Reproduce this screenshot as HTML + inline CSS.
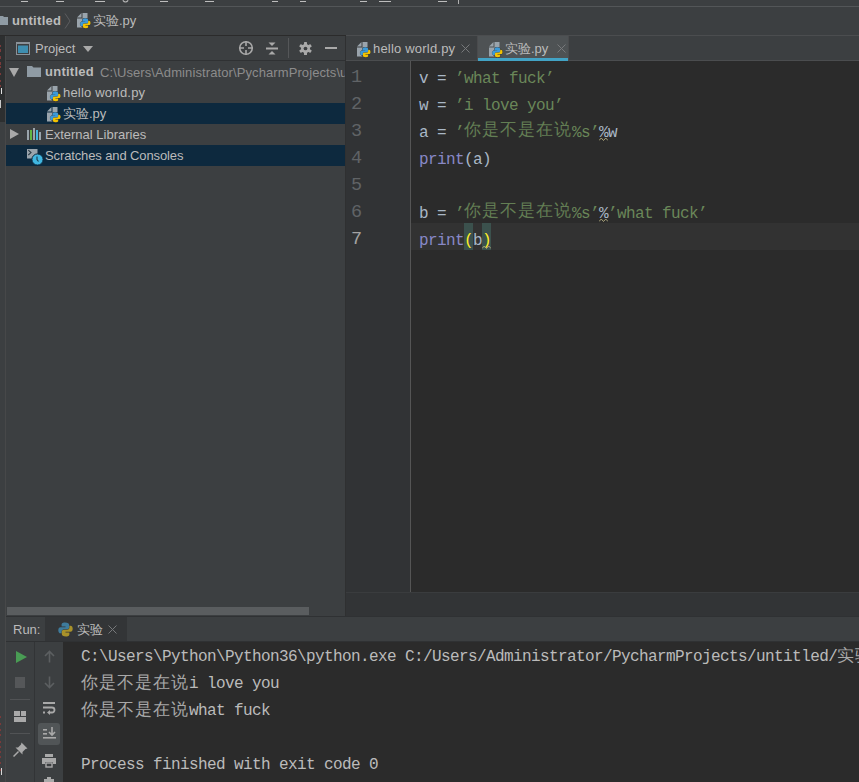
<!DOCTYPE html>
<html><head><meta charset="utf-8">
<style>
*{margin:0;padding:0;box-sizing:border-box}
html,body{width:859px;height:782px;overflow:hidden;background:#3c3f41;font-family:"Liberation Sans",sans-serif;font-size:13px;color:#bbbbbb}
.a{position:absolute}
.mono{font-family:"Liberation Mono",monospace;font-size:16px;letter-spacing:-0.6px;white-space:pre}
.cj{font-size:17px;letter-spacing:1px;position:relative;top:-2px;line-height:0}
svg{position:absolute;display:block}
.t{white-space:pre;color:#bbbbbb;line-height:15px}
.ul{top:1px;height:1px;background:#bdbdbd}
.s{color:#6a8759}.s .cj{color:#637e54}.k{color:#8888c6}.y{color:#ffef28}
</style></head><body>


<!-- menu bar remnants -->
<div class="a" style="left:0;top:0;width:859px;height:6px;background:#3c3f41"></div>
<div class="a" style="left:0;top:6px;width:859px;height:1px;background:#535658"></div>

<!-- nav bar -->
<div class="a" style="left:0;top:7px;width:859px;height:28px;background:#3c3f41"></div>
<div class="a" style="left:0;top:35px;width:346px;height:1px;background:#2b2b2b"></div>

<!-- left strip -->
<div class="a" style="left:0;top:36px;width:5px;height:746px;background:#3c3f41"></div>
<div class="a" style="left:0;top:36px;width:5px;height:86px;background:#2d2f30"></div>
<div class="a" style="left:5px;top:36px;width:1px;height:746px;background:#474849"></div>


<div class="a" style="left:0;top:45px;width:1px;height:2px;background:#7a3a3a"></div>
<div class="a" style="left:0;top:49px;width:1px;height:3px;background:#7a3a3a"></div>
<div class="a" style="left:0;top:56px;width:1px;height:3px;background:#7a3a3a"></div>
<div class="a" style="left:0;top:62px;width:1px;height:3px;background:#7a3a3a"></div>
<div class="a" style="left:0;top:66px;width:1px;height:2px;background:#7a3a3a"></div>
<div class="a" style="left:0;top:73px;width:1px;height:2px;background:#7a3a3a"></div>
<div class="a" style="left:0;top:80px;width:1px;height:2px;background:#7a3a3a"></div>
<div class="a" style="left:0;top:85px;width:1px;height:2px;background:#7a3a3a"></div>
<div class="a" style="left:1px;top:88px;width:1px;height:6px;background:#e0e0e0"></div>
<div class="a" style="left:0;top:100px;width:1px;height:8px;background:#c8c8c8"></div>
<div class="a" style="left:0;top:716px;width:1px;height:2px;background:#7a3a3a"></div>
<div class="a" style="left:0;top:723px;width:1px;height:2px;background:#7a3a3a"></div>
<div class="a" style="left:0;top:729px;width:1px;height:2px;background:#7a3a3a"></div>
<div class="a" style="left:0;top:734px;width:1px;height:2px;background:#7a3a3a"></div>
<div class="a" style="left:0;top:741px;width:1px;height:2px;background:#7a3a3a"></div>
<div class="a" style="left:0;top:746px;width:1px;height:2px;background:#7a3a3a"></div>
<div class="a" style="left:0;top:751px;width:1px;height:2px;background:#7a3a3a"></div>
<div class="a" style="left:0;top:756px;width:1px;height:2px;background:#7a3a3a"></div>
<div class="a" style="left:0;top:762px;width:1px;height:2px;background:#7a3a3a"></div>
<div class="a" style="left:0;top:769px;width:1px;height:2px;background:#7a3a3a"></div>
<div class="a" style="left:1px;top:768px;width:1px;height:7px;background:#d8d8d8"></div>
<!-- project panel -->
<div class="a" style="left:6px;top:36px;width:339px;height:24px;background:#3c3f41"></div>
<div class="a" style="left:6px;top:60px;width:339px;height:1px;background:#2f3133"></div>
<div class="a" style="left:6px;top:103px;width:339px;height:21px;background:#0d293e"></div>
<div class="a" style="left:6px;top:145px;width:339px;height:21px;background:#0d293e"></div>
<div class="a" style="left:7px;top:607px;width:302px;height:8px;background:#5a5d5f"></div>
<div class="a" style="left:345px;top:36px;width:1px;height:580px;background:#2f3031"></div>

<!-- editor -->
<div class="a" style="left:346px;top:35px;width:513px;height:1px;background:#4b4d4f"></div>
<div class="a" style="left:346px;top:36px;width:513px;height:24px;background:#3c3f41"></div>
<div class="a" style="left:478px;top:36px;width:90px;height:24px;background:#4e5254"></div>
<div class="a" style="left:346px;top:60px;width:513px;height:1px;background:#4b4d4f"></div>
<div class="a" style="left:477px;top:36px;width:1px;height:24px;background:#4a4b4d"></div>
<div class="a" style="left:568px;top:36px;width:1px;height:24px;background:#4a4b4d"></div>
<div class="a" style="left:478px;top:58px;width:90px;height:3px;background:#42a3c5"></div>
<div class="a" style="left:346px;top:61px;width:64px;height:531px;background:#313335"></div>
<div class="a" style="left:410px;top:61px;width:1px;height:531px;background:#555555"></div>
<div class="a" style="left:411px;top:61px;width:448px;height:531px;background:#2b2b2b"></div>
<div class="a" style="left:411px;top:223px;width:448px;height:27px;background:#323232"></div>
<div class="a" style="left:346px;top:592px;width:513px;height:1px;background:#3a3c3e"></div>
<div class="a" style="left:346px;top:593px;width:513px;height:23px;background:#323436"></div>

<div class="a" style="left:6px;top:616px;width:853px;height:1px;background:#2f3133"></div>

<!-- run header -->
<div class="a" style="left:6px;top:617px;width:853px;height:24px;background:#3c3f41"></div>
<div class="a" style="left:45px;top:617px;width:82px;height:24px;background:#333537"></div>
<div class="a" style="left:6px;top:641px;width:853px;height:1px;background:#2f3133"></div>

<!-- run toolbar + console -->
<div class="a" style="left:6px;top:642px;width:57px;height:140px;background:#3c3f41"></div>
<div class="a" style="left:34px;top:642px;width:1px;height:140px;background:#323436"></div>
<div class="a" style="left:63px;top:642px;width:796px;height:140px;background:#2b2b2b"></div>


<!-- menu underline remnants -->
<div class="a ul" style="left:21px;width:7px"></div>
<div class="a ul" style="left:56px;width:8px"></div>
<div class="a ul" style="left:95px;width:10px"></div>
<div class="a ul" style="left:160px;width:8px"></div>
<div class="a ul" style="left:205px;width:9px"></div>
<div class="a ul" style="left:272px;width:6px"></div>
<div class="a ul" style="left:300px;width:6px"></div>
<div class="a ul" style="left:360px;width:7px"></div>
<div class="a ul" style="left:379px;width:12px"></div>
<div class="a ul" style="left:438px;width:9px"></div>

<svg width="7" height="4" viewBox="0 0 7 4" style="left:122px;top:0"><path d="M0.8 0.3Q3.5 3.6 6.2 0.3" fill="none" stroke="#b8b8b8" stroke-width="1.1"/></svg>
<div class="a" style="left:458px;top:0;width:1px;height:4px;background:#b0b0b0"></div>
<!-- nav bar content -->
<svg width="8" height="10" viewBox="0 0 8 10" style="left:0;top:15px"><path d="M0 1H3L4 2H8V10H0Z" fill="#8f9ba4"/></svg>
<div class="a t" style="left:12px;top:13px;font-weight:bold;color:#bbbbbb;letter-spacing:0.3px">untitled</div>
<svg width="7" height="16" viewBox="0 0 7 16" style="left:64px;top:13px"><path d="M1 0.5L6 8L1 15.5" fill="none" stroke="#5c5e60" stroke-width="1"/></svg>
<svg class="pyi" width="14" height="16" viewBox="0 0 14 16" style="left:77px;top:13px"><path d="M0 4.5L4.5 0V4.5Z" fill="#9aa4ac"/><path d="M5.5 0H10.5V5.5H5.5Z" fill="#9aa4ac"/><path d="M0 5.5H5.5V14.5H0Z" fill="#9aa4ac"/>
<g transform="translate(3.2 5.2) scale(0.7)"><path d="M7 0.5C4 0.5 3.6 1.8 3.6 3V4.5H7.5V5.2H2.5C1.2 5.2 0.3 6.3 0.3 8.2S1.2 11.3 2.5 11.3H3.6V9.6C3.6 8.3 4.7 7.3 6 7.3H9.2C10.3 7.3 11.2 6.4 11.2 5.3V3C11.2 1.6 10 0.5 7 0.5Z" fill="#3c9ad8" stroke="#33373a" stroke-width="1.4" paint-order="stroke"/><path d="M8 14.5C11 14.5 11.4 13.2 11.4 12V10.5H7.5V9.8H12.5C13.8 9.8 14.7 8.7 14.7 6.8S13.8 3.7 12.5 3.7H11.4V5.4C11.4 6.7 10.3 7.7 9 7.7H5.8C4.7 7.7 3.8 8.6 3.8 9.7V12C3.8 13.4 5 14.5 8 14.5Z" fill="#f4c300" stroke="#33373a" stroke-width="1.4" paint-order="stroke"/><path d="M7 0.5C4 0.5 3.6 1.8 3.6 3V4.5H7.5V5.2H2.5C1.2 5.2 0.3 6.3 0.3 8.2S1.2 11.3 2.5 11.3H3.6V9.6C3.6 8.3 4.7 7.3 6 7.3H9.2C10.3 7.3 11.2 6.4 11.2 5.3V3C11.2 1.6 10 0.5 7 0.5Z" fill="#3c9ad8"/></g></svg>
<div class="a t" style="left:93px;top:13px">实验.py</div>

<!-- project header -->
<svg width="14" height="13" viewBox="0 0 14 13" style="left:16px;top:42px"><rect x="0.5" y="0.5" width="13" height="12" fill="none" stroke="#8a9299" stroke-width="1"/><rect x="0" y="0" width="14" height="2" fill="#8a9299"/><rect x="2" y="3.5" width="10" height="7.5" fill="#3e8eb0"/></svg>
<div class="a t" style="left:35px;top:41px">Project</div>
<svg width="10" height="6" viewBox="0 0 10 6" style="left:83px;top:46px"><path d="M0 0H10L5 6Z" fill="#a9a9a9"/></svg>

<svg width="16" height="16" viewBox="0 0 16 16" style="left:238px;top:40px"><circle cx="8" cy="8" r="6.3" fill="none" stroke="#a9a9a9" stroke-width="1.6"/><path d="M8 1V6M8 10V15M1 8H6M10 8H15" stroke="#a9a9a9" stroke-width="1.6"/></svg>
<svg width="12" height="13" viewBox="0 0 12 13" style="left:266px;top:42px"><path d="M2.5 0.5H9.5L6 4Z" fill="#a9a9a9"/><path d="M2.5 12.5H9.5L6 9Z" fill="#a9a9a9"/><rect x="0" y="5.5" width="12" height="2" fill="#a9a9a9"/></svg>
<div class="a" style="left:288px;top:38px;width:1px;height:20px;background:#555759"></div>
<svg width="13" height="13" viewBox="0 0 14 14" style="left:299px;top:42px"><g fill="#a9a9a9"><rect x="5.4" y="0" width="3.2" height="3.5" rx="0.6" transform="rotate(0 7 7)"/><rect x="5.4" y="0" width="3.2" height="3.5" rx="0.6" transform="rotate(60 7 7)"/><rect x="5.4" y="0" width="3.2" height="3.5" rx="0.6" transform="rotate(120 7 7)"/><rect x="5.4" y="0" width="3.2" height="3.5" rx="0.6" transform="rotate(180 7 7)"/><rect x="5.4" y="0" width="3.2" height="3.5" rx="0.6" transform="rotate(240 7 7)"/><rect x="5.4" y="0" width="3.2" height="3.5" rx="0.6" transform="rotate(300 7 7)"/><circle cx="7" cy="7" r="4.8"/></g><circle cx="7" cy="7" r="2" fill="#3c3f41"/></svg>
<div class="a" style="left:325px;top:47px;width:12px;height:2px;background:#a9a9a9"></div>

<!-- tree -->
<svg width="10" height="9" viewBox="0 0 10 9" style="left:9px;top:68px"><path d="M0 0H10L5 9Z" fill="#a9a9a9"/></svg>
<svg width="14" height="11" viewBox="0 0 14 11" style="left:27px;top:66px"><path d="M0 0H5L6.5 1.5H14V11H0Z" fill="#8f9ba4"/></svg>
<div class="a t" style="left:45px;top:64px;font-weight:bold;letter-spacing:0.25px">untitled</div>
<div class="a" style="left:100px;top:61px;width:245px;height:21px;overflow:hidden"><div class="a t" style="left:0;top:4px;color:#8c8c8c;letter-spacing:0.1px">C:\Users\Administrator\PycharmProjects\untitled</div></div>
<svg class="pyi" width="14" height="16" viewBox="0 0 14 16" style="left:47px;top:86px"><path d="M0 4.5L4.5 0V4.5Z" fill="#9aa4ac"/><path d="M5.5 0H10.5V5.5H5.5Z" fill="#9aa4ac"/><path d="M0 5.5H5.5V14.5H0Z" fill="#9aa4ac"/>
<g transform="translate(3.2 5.2) scale(0.7)"><path d="M7 0.5C4 0.5 3.6 1.8 3.6 3V4.5H7.5V5.2H2.5C1.2 5.2 0.3 6.3 0.3 8.2S1.2 11.3 2.5 11.3H3.6V9.6C3.6 8.3 4.7 7.3 6 7.3H9.2C10.3 7.3 11.2 6.4 11.2 5.3V3C11.2 1.6 10 0.5 7 0.5Z" fill="#3c9ad8" stroke="#33373a" stroke-width="1.4" paint-order="stroke"/><path d="M8 14.5C11 14.5 11.4 13.2 11.4 12V10.5H7.5V9.8H12.5C13.8 9.8 14.7 8.7 14.7 6.8S13.8 3.7 12.5 3.7H11.4V5.4C11.4 6.7 10.3 7.7 9 7.7H5.8C4.7 7.7 3.8 8.6 3.8 9.7V12C3.8 13.4 5 14.5 8 14.5Z" fill="#f4c300" stroke="#33373a" stroke-width="1.4" paint-order="stroke"/><path d="M7 0.5C4 0.5 3.6 1.8 3.6 3V4.5H7.5V5.2H2.5C1.2 5.2 0.3 6.3 0.3 8.2S1.2 11.3 2.5 11.3H3.6V9.6C3.6 8.3 4.7 7.3 6 7.3H9.2C10.3 7.3 11.2 6.4 11.2 5.3V3C11.2 1.6 10 0.5 7 0.5Z" fill="#3c9ad8"/></g></svg>
<div class="a t" style="left:63px;top:85px;letter-spacing:0.2px">hello world.py</div>
<svg class="pyi" width="14" height="16" viewBox="0 0 14 16" style="left:47px;top:107px"><path d="M0 4.5L4.5 0V4.5Z" fill="#9aa4ac"/><path d="M5.5 0H10.5V5.5H5.5Z" fill="#9aa4ac"/><path d="M0 5.5H5.5V14.5H0Z" fill="#9aa4ac"/>
<g transform="translate(3.2 5.2) scale(0.7)"><path d="M7 0.5C4 0.5 3.6 1.8 3.6 3V4.5H7.5V5.2H2.5C1.2 5.2 0.3 6.3 0.3 8.2S1.2 11.3 2.5 11.3H3.6V9.6C3.6 8.3 4.7 7.3 6 7.3H9.2C10.3 7.3 11.2 6.4 11.2 5.3V3C11.2 1.6 10 0.5 7 0.5Z" fill="#3c9ad8" stroke="#33373a" stroke-width="1.4" paint-order="stroke"/><path d="M8 14.5C11 14.5 11.4 13.2 11.4 12V10.5H7.5V9.8H12.5C13.8 9.8 14.7 8.7 14.7 6.8S13.8 3.7 12.5 3.7H11.4V5.4C11.4 6.7 10.3 7.7 9 7.7H5.8C4.7 7.7 3.8 8.6 3.8 9.7V12C3.8 13.4 5 14.5 8 14.5Z" fill="#f4c300" stroke="#33373a" stroke-width="1.4" paint-order="stroke"/><path d="M7 0.5C4 0.5 3.6 1.8 3.6 3V4.5H7.5V5.2H2.5C1.2 5.2 0.3 6.3 0.3 8.2S1.2 11.3 2.5 11.3H3.6V9.6C3.6 8.3 4.7 7.3 6 7.3H9.2C10.3 7.3 11.2 6.4 11.2 5.3V3C11.2 1.6 10 0.5 7 0.5Z" fill="#3c9ad8"/></g></svg>
<div class="a t" style="left:63px;top:106px">实验.py</div>
<svg width="9" height="10" viewBox="0 0 9 10" style="left:10px;top:129px"><path d="M0 0V10L9 5Z" fill="#a9a9a9"/></svg>
<svg width="15" height="13" viewBox="0 0 15 13" style="left:27px;top:128px"><rect x="0" y="2" width="2" height="10" fill="#9aa4ac"/><rect x="3" y="2" width="2" height="10" fill="#62b543"/><rect x="6" y="0" width="2" height="12" fill="#9aa4ac"/><rect x="9" y="2" width="2" height="10" fill="#40b6e0"/><rect x="12" y="4" width="2" height="8" fill="#9aa4ac"/></svg>
<div class="a t" style="left:45px;top:127px">External Libraries</div>
<svg width="17" height="17" viewBox="0 0 17 17" style="left:27px;top:149px"><path d="M0 0H10.5V9.5H0Z" fill="#9aa4ac"/><path d="M1.3 1.2L4 3.6 1.3 6" fill="none" stroke="#2b3a44" stroke-width="1.1"/><circle cx="10.5" cy="10.5" r="5.6" fill="#40b6e0" stroke="#0d293e" stroke-width="1"/><path d="M10 7.5V10.5L11.5 12.5" fill="none" stroke="#1d3b4c" stroke-width="1.1"/></svg>
<div class="a t" style="left:45px;top:148px;letter-spacing:-0.12px">Scratches and Consoles</div>

<!-- editor tabs -->
<svg class="pyi" width="14" height="16" viewBox="0 0 14 16" style="left:357px;top:42px"><path d="M0 4.5L4.5 0V4.5Z" fill="#9aa4ac"/><path d="M5.5 0H10.5V5.5H5.5Z" fill="#9aa4ac"/><path d="M0 5.5H5.5V14.5H0Z" fill="#9aa4ac"/>
<g transform="translate(3.2 5.2) scale(0.7)"><path d="M7 0.5C4 0.5 3.6 1.8 3.6 3V4.5H7.5V5.2H2.5C1.2 5.2 0.3 6.3 0.3 8.2S1.2 11.3 2.5 11.3H3.6V9.6C3.6 8.3 4.7 7.3 6 7.3H9.2C10.3 7.3 11.2 6.4 11.2 5.3V3C11.2 1.6 10 0.5 7 0.5Z" fill="#3c9ad8" stroke="#33373a" stroke-width="1.4" paint-order="stroke"/><path d="M8 14.5C11 14.5 11.4 13.2 11.4 12V10.5H7.5V9.8H12.5C13.8 9.8 14.7 8.7 14.7 6.8S13.8 3.7 12.5 3.7H11.4V5.4C11.4 6.7 10.3 7.7 9 7.7H5.8C4.7 7.7 3.8 8.6 3.8 9.7V12C3.8 13.4 5 14.5 8 14.5Z" fill="#f4c300" stroke="#33373a" stroke-width="1.4" paint-order="stroke"/><path d="M7 0.5C4 0.5 3.6 1.8 3.6 3V4.5H7.5V5.2H2.5C1.2 5.2 0.3 6.3 0.3 8.2S1.2 11.3 2.5 11.3H3.6V9.6C3.6 8.3 4.7 7.3 6 7.3H9.2C10.3 7.3 11.2 6.4 11.2 5.3V3C11.2 1.6 10 0.5 7 0.5Z" fill="#3c9ad8"/></g></svg>
<div class="a t" style="left:373px;top:41px;letter-spacing:0.2px">hello world.py</div>
<svg width="9" height="9" viewBox="0 0 9 9" style="left:461px;top:44px"><path d="M0.5 0.5L8.5 8.5M8.5 0.5L0.5 8.5" stroke="#77797b" stroke-width="1"/></svg>
<svg class="pyi" width="14" height="16" viewBox="0 0 14 16" style="left:489px;top:42px"><path d="M0 4.5L4.5 0V4.5Z" fill="#9aa4ac"/><path d="M5.5 0H10.5V5.5H5.5Z" fill="#9aa4ac"/><path d="M0 5.5H5.5V14.5H0Z" fill="#9aa4ac"/>
<g transform="translate(3.2 5.2) scale(0.7)"><path d="M7 0.5C4 0.5 3.6 1.8 3.6 3V4.5H7.5V5.2H2.5C1.2 5.2 0.3 6.3 0.3 8.2S1.2 11.3 2.5 11.3H3.6V9.6C3.6 8.3 4.7 7.3 6 7.3H9.2C10.3 7.3 11.2 6.4 11.2 5.3V3C11.2 1.6 10 0.5 7 0.5Z" fill="#3c9ad8" stroke="#33373a" stroke-width="1.4" paint-order="stroke"/><path d="M8 14.5C11 14.5 11.4 13.2 11.4 12V10.5H7.5V9.8H12.5C13.8 9.8 14.7 8.7 14.7 6.8S13.8 3.7 12.5 3.7H11.4V5.4C11.4 6.7 10.3 7.7 9 7.7H5.8C4.7 7.7 3.8 8.6 3.8 9.7V12C3.8 13.4 5 14.5 8 14.5Z" fill="#f4c300" stroke="#33373a" stroke-width="1.4" paint-order="stroke"/><path d="M7 0.5C4 0.5 3.6 1.8 3.6 3V4.5H7.5V5.2H2.5C1.2 5.2 0.3 6.3 0.3 8.2S1.2 11.3 2.5 11.3H3.6V9.6C3.6 8.3 4.7 7.3 6 7.3H9.2C10.3 7.3 11.2 6.4 11.2 5.3V3C11.2 1.6 10 0.5 7 0.5Z" fill="#3c9ad8"/></g></svg>
<div class="a t" style="left:505px;top:41px">实验.py</div>
<svg width="9" height="9" viewBox="0 0 9 9" style="left:557px;top:44px"><path d="M0.5 0.5L8.5 8.5M8.5 0.5L0.5 8.5" stroke="#77797b" stroke-width="1"/></svg>

<!-- gutter numbers -->
<div class="a mono ln" style="left:351px;top:64px;color:#606366;line-height:27px;font-size:18.5px;letter-spacing:0">1
2
3
4
5
6
<span style="color:#a4a3a3">7</span></div>

<!-- code -->
<div class="a" style="left:464px;top:223px;width:9px;height:27px;background:#3b514d"></div>
<div class="a" style="left:482px;top:223px;width:9px;height:27px;background:#3b514d"></div>
<div class="a mono code" style="left:419px;top:66px;line-height:27px;color:#a9b7c6">v = <span class="s">’what fuck’</span>
w = <span class="s">’i love you’</span>
a = <span class="s">’<span class="cj">你是不是在说</span>%s’</span>%w
<span class="k">print</span>(a)

b = <span class="s">’<span class="cj">你是不是在说</span>%s’</span>%<span class="s">’what fuck’</span>
<span class="k">print</span><span class="y">(</span>b<span class="y">)</span></div>


<svg width="9" height="4" viewBox="0 0 9 4" style="left:599px;top:137px"><path d="M0 3.5L2.25 1 4.5 3.5 6.75 1 9 3.5" fill="none" stroke="#a9a27a" stroke-width="1"/></svg>
<svg width="9" height="4" viewBox="0 0 9 4" style="left:599px;top:218px"><path d="M0 3.5L2.25 1 4.5 3.5 6.75 1 9 3.5" fill="none" stroke="#a9a27a" stroke-width="1"/></svg>
<svg width="9" height="4" viewBox="0 0 9 4" style="left:482px;top:245px"><path d="M0 3.5L2.25 1 4.5 3.5 6.75 1 9 3.5" fill="none" stroke="#a9a27a" stroke-width="1"/></svg>
<!-- run header content -->
<div class="a t" style="left:13px;top:622px">Run:</div>
<svg width="15" height="15" viewBox="0 0 15 15" style="left:58px;top:622px"><path d="M7 0.5C4 0.5 3.6 1.8 3.6 3V4.5H7.5V5.2H2.5C1.2 5.2 0.3 6.3 0.3 8.2S1.2 11.3 2.5 11.3H3.6V9.6C3.6 8.3 4.7 7.3 6 7.3H9.2C10.3 7.3 11.2 6.4 11.2 5.3V3C11.2 1.6 10 0.5 7 0.5Z" fill="#3e7b9c"/><path d="M8 14.5C11 14.5 11.4 13.2 11.4 12V10.5H7.5V9.8H12.5C13.8 9.8 14.7 8.7 14.7 6.8S13.8 3.7 12.5 3.7H11.4V5.4C11.4 6.7 10.3 7.7 9 7.7H5.8C4.7 7.7 3.8 8.6 3.8 9.7V12C3.8 13.4 5 14.5 8 14.5Z" fill="#a8912a"/></svg>
<div class="a t" style="left:77px;top:622px">实验</div>
<svg width="9" height="9" viewBox="0 0 9 9" style="left:108px;top:625px"><path d="M0.5 0.5L8.5 8.5M8.5 0.5L0.5 8.5" stroke="#77797b" stroke-width="1"/></svg>

<!-- run toolbar icons -->
<svg width="11" height="12" viewBox="0 0 11 12" style="left:16px;top:651px"><path d="M0 0L11 6L0 12Z" fill="#499c54"/></svg>
<div class="a" style="left:15px;top:677px;width:10px;height:11px;background:#555759"></div>
<div class="a" style="left:10px;top:699px;width:20px;height:1px;background:#515355"></div>
<svg width="12" height="11" viewBox="0 0 12 11" style="left:14px;top:711px"><rect x="0" y="0" width="6" height="5" fill="#a9a9a9"/><rect x="7" y="0" width="5" height="5" fill="#a9a9a9"/><rect x="0" y="6" width="12" height="5" fill="#a9a9a9"/></svg>
<div class="a" style="left:10px;top:733px;width:20px;height:1px;background:#515355"></div>
<svg width="15" height="15" viewBox="0 0 15 15" style="left:13px;top:742px"><path d="M8.5 0.5L14.5 6.5 12.5 7 9.5 10 9.5 12.5 2.5 5.5 5 5.5 8 2.5Z" fill="#a9a9a9"/><path d="M5.5 9.5L0.5 14.5" stroke="#a9a9a9" stroke-width="1.5"/></svg>

<svg width="11" height="13" viewBox="0 0 11 13" style="left:44px;top:650px"><path d="M5.5 1.5V12.5M1 6L5.5 1.5 10 6" fill="none" stroke="#5c5f61" stroke-width="1.6"/></svg>
<svg width="11" height="13" viewBox="0 0 11 13" style="left:44px;top:676px"><path d="M5.5 0.5V11.5M1 7L5.5 11.5 10 7" fill="none" stroke="#5c5f61" stroke-width="1.6"/></svg>
<svg width="13" height="13" viewBox="0 0 13 13" style="left:43px;top:702px"><rect x="0" y="0" width="12" height="2" fill="#a9a9a9"/><path d="M0 5.5H9A2.5 2.5 0 0 1 9 10.5H6.5" fill="none" stroke="#a9a9a9" stroke-width="1.8"/><path d="M7 8L4 10.5 7 13Z" fill="#a9a9a9"/><rect x="0" y="9.5" width="2" height="2" fill="#a9a9a9"/></svg>
<div class="a" style="left:38px;top:723px;width:22px;height:22px;background:#515557;border-radius:3px"></div>
<svg width="13" height="12" viewBox="0 0 13 12" style="left:43px;top:727px"><rect x="0" y="2" width="4" height="1.6" fill="#a9a9a9"/><rect x="0" y="6" width="4" height="1.6" fill="#a9a9a9"/><rect x="0" y="10" width="13" height="1.6" fill="#a9a9a9"/><path d="M9 0V7.5M6 5L9 8 12 5" fill="none" stroke="#a9a9a9" stroke-width="1.6"/></svg>
<svg width="14" height="14" viewBox="0 0 14 14" style="left:42px;top:754px"><rect x="3" y="0" width="8" height="3" fill="#a9a9a9"/><path d="M0 4H14V10H11V8H3V10H0Z" fill="#a9a9a9"/><rect x="4" y="9" width="6" height="4" fill="none" stroke="#a9a9a9" stroke-width="1.4"/></svg>
<svg width="10" height="6" viewBox="0 0 10 6" style="left:44px;top:777px"><rect x="3" y="0" width="4" height="2" fill="#a9a9a9"/><rect x="0" y="2" width="10" height="4" fill="#a9a9a9"/></svg>

<!-- console -->
<div class="a mono" style="left:81px;top:644px;line-height:27px;color:#bbbbbb">C:\Users\Python\Python36\python.exe C:/Users/Administrator/PycharmProjects/untitled/<span class="cj" style="top:0;color:#a8a8a8">实验</span>.py
<span class="cj" style="top:0;color:#a8a8a8">你是不是在说</span>i love you
<span class="cj" style="top:0;color:#a8a8a8">你是不是在说</span>what fuck

Process finished with exit code 0</div>

</body></html>
